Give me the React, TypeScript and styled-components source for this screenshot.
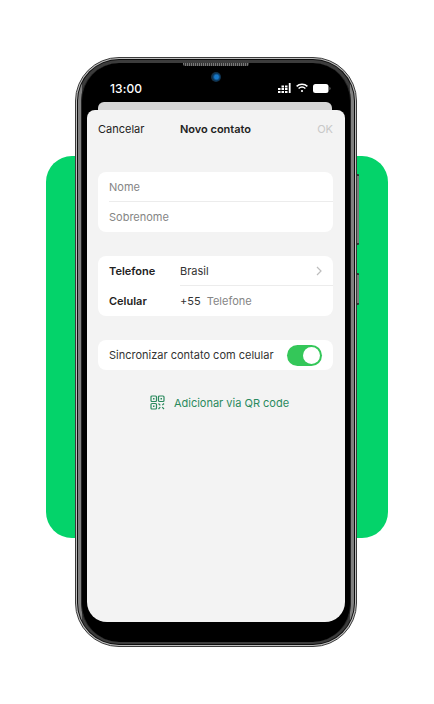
import React from "react";
import styled, { createGlobalStyle } from "styled-components";

const Global = createGlobalStyle`
  html, body { margin: 0; padding: 0; background: #fff; }
  body { font-family: Inter, "Liberation Sans", sans-serif; -webkit-font-smoothing: antialiased; }
  * { box-sizing: border-box; }
`;

const Stage = styled.div`
  position: relative;
  width: 434px;
  height: 704px;
  padding: 156px 46px 0;
  overflow: hidden;
`;

const GreenPanel = styled.div`
  width: 342px;
  height: 382px;
  border-radius: 26px;
  background: #04d36a;
`;

const Phone = styled.div`
  position: absolute;
  left: 75px;
  top: 57px;
  width: 282px;
  height: 590px;
  border-radius: 44px;
  background: #bdbdbd;
  padding: 1px;
  border: 1px solid #3a3a3a;
`;

const RingOuter = styled.div`
  height: 100%;
  border-radius: 42px;
  background: #0c0c0c;
  padding: 1px;
`;

const RingMid = styled.div`
  height: 100%;
  border-radius: 41px;
  background: linear-gradient(90deg, #808080 0 4px, #3c3c3c 4px calc(100% - 4px), #808080 calc(100% - 4px));
  padding: 3px 3px 2px;
`;

const Bezel = styled.div`
  position: relative;
  height: 100%;
  border-radius: 38px;
  background: #000;
  padding: 39px 5px 20px;
  display: flex;
  flex-direction: column;
  border-left: 1px solid #222;
  border-right: 1px solid #222;
`;

const SideButton = styled.div<{ $top: number; $height: number }>`
  position: absolute;
  left: 281px;
  top: ${(p) => p.$top}px;
  width: 2px;
  height: ${(p) => p.$height}px;
  background: linear-gradient(180deg, #333 0 2px, #7a7a7a 2px calc(100% - 2px), #333 calc(100% - 2px));
  border-radius: 0 1px 1px 0;
`;

const Speaker = styled.div`
  position: absolute;
  top: 0;
  left: 50%;
  margin-left: -33px;
  width: 66px;
  height: 3px;
  background: repeating-linear-gradient(90deg, #777 0 1px, #333 1px 2px);
  border-radius: 0 0 2px 2px;
`;

const Camera = styled.div`
  position: absolute;
  top: 9px;
  left: 50%;
  margin-left: -5px;
  width: 10px;
  height: 10px;
  border-radius: 50%;
  background: radial-gradient(circle at 55% 50%, #1878c8 0 25%, #0a3558 50%, #1c2a35 75%, #333 100%);
`;

const StatusBar = styled.div`
  position: absolute;
  top: 18px;
  left: 28px;
  right: 19px;
  height: 14px;
  display: flex;
  align-items: center;
  justify-content: space-between;
  color: #fff;
`;

const Clock = styled.span`
  font-size: 12px;
  font-weight: 500;
  letter-spacing: 0.1px;
`;

const StatusIcons = styled.div`
  display: flex;
  align-items: center;
  gap: 5px;
`;

const SheetBack = styled.div`
  height: 8px;
  margin: 0 13px 0 11px;
  flex: none;
  border-radius: 6px 6px 0 0;
  background: #d6d6d6;
`;

const Screen = styled.div`
  flex: 1;
  background: #f3f3f3;
  border-radius: 8px 8px 20px 20px;
  padding: 0 12px 0 11px;
  display: flex;
  flex-direction: column;
`;

const Header = styled.div`
  height: 37px;
  display: grid;
  grid-template-columns: 1fr auto 1fr;
  align-items: center;
  margin-bottom: 25px;
  font-size: 11px;
`;

const HeaderText = styled.span<{ $tone: "plain" | "title" | "off" }>`
  color: ${(p) => (p.$tone === "off" ? "#c8c8c8" : "#222")};
  font-weight: ${(p) => (p.$tone === "title" ? 600 : 400)};
  text-align: ${(p) => (p.$tone === "off" ? "right" : "left")};
`;

const Card = styled.div<{ $gap: number }>`
  background: #fff;
  border-radius: 8px;
  margin-bottom: ${(p) => p.$gap}px;
`;

const NameRow = styled.div<{ $divider?: boolean }>`
  height: 30px;
  margin-left: 11px;
  display: flex;
  align-items: center;
  font-size: 11px;
  color: #858585;
  border-bottom: ${(p) => (p.$divider ? "1px solid #ececec" : "none")};
`;

const PhoneRow = styled.div`
  height: 30px;
  padding-left: 11px;
  display: flex;
  align-items: center;
  font-size: 11px;
`;

const PhoneLabel = styled.span`
  width: 71px;
  flex: none;
  font-weight: 600;
  color: #222;
`;

const PhoneValue = styled.div<{ $divider?: boolean }>`
  flex: 1;
  height: 100%;
  display: flex;
  align-items: center;
  justify-content: space-between;
  padding-right: 11px;
  color: #333;
  border-bottom: ${(p) => (p.$divider ? "1px solid #ececec" : "none")};
`;

const Prefix = styled.span`
  color: #333;
  margin-right: 6px;
`;

const Hint = styled.span`
  color: #858585;
  flex: 1;
`;

const SyncCard = styled.div`
  height: 30px;
  padding: 0 11px;
  background: #fff;
  border-radius: 8px;
  display: flex;
  align-items: center;
  justify-content: space-between;
  font-size: 11px;
  color: #333;
`;

const Toggle = styled.div`
  width: 35px;
  height: 21px;
  border-radius: 11px;
  background: #34c759;
  padding: 2px;
  display: flex;
  justify-content: flex-end;
`;

const Knob = styled.div`
  width: 17px;
  height: 17px;
  border-radius: 50%;
  background: #fff;
`;

const QrLink = styled.div`
  margin-top: 25px;
  padding-left: 8px;
  display: flex;
  align-items: center;
  justify-content: center;
  gap: 9px;
  font-size: 11px;
  color: #2a8a5e;
`;

const SignalIcon = () => (
  <svg width="13" height="10" viewBox="0 0 13 10" fill="#fff">
    <rect x="0" y="5" width="2.500" height="2" /><rect x="0" y="8" width="2.500" height="2" />
    <rect x="3.500" y="2.500" width="2.500" height="2" /><rect x="3.500" y="5" width="2.500" height="2" /><rect x="3.500" y="8" width="2.500" height="2" />
    <rect x="7" y="2.500" width="2.500" height="2" /><rect x="7" y="5" width="2.500" height="2" /><rect x="7" y="8" width="2.500" height="2" />
    <rect x="10.800" y="0" width="1.800" height="10" />
  </svg>
);

const WifiIcon = () => (
  <svg width="12" height="10" viewBox="0 0 12 10" fill="none" stroke="#fff" strokeWidth="1.5">
    <path d="M.6 3.4C3.6.6 8.4.6 11.4 3.4" />
    <path d="M2.6 5.5c2-1.700 4.800-1.700 6.800 0" />
    <circle cx="6" cy="8" r="1.100" fill="#fff" stroke="none" />
  </svg>
);

const BatteryIcon = () => (
  <svg width="18" height="9" viewBox="0 0 18 9">
    <rect x="0" y="0" width="15.500" height="9" rx="2.500" fill="#fff" />
    <path d="M16.500 3v3c.7-.2 1-.8 1-1.500s-.3-1.300-1-1.500z" fill="#777" />
  </svg>
);

const Chevron = () => (
  <svg width="6" height="10" viewBox="0 0 6 10" fill="none" stroke="#bdbdbd" strokeWidth="1.200">
    <path d="M1 1l4 4-4 4" />
  </svg>
);

const QrIcon = () => (
  <svg width="15" height="15" viewBox="0 0 15 15" fill="none" stroke="#2a8a5e" strokeWidth="1.200">
    <rect x="1" y="1" width="5.500" height="5.500" rx="1" />
    <rect x="8.500" y="1" width="5.500" height="5.500" rx="1" />
    <rect x="1" y="8.500" width="5.500" height="5.500" rx="1" />
    <rect x="3" y="3" width="1.500" height="1.500" fill="#2a8a5e" stroke="none" />
    <rect x="10.500" y="3" width="1.500" height="1.500" fill="#2a8a5e" stroke="none" />
    <rect x="3" y="10.500" width="1.500" height="1.500" fill="#2a8a5e" stroke="none" />
    <path d="M8.500 8.500l1.800 1.800M14 8.500l-1.700 1.700M8.500 14l1.800-1.800M14 14l-1.800-1.800" />
  </svg>
);

export default function App() {
  return (
    <>
      <Global />
      <Stage>
        <GreenPanel />
        <Phone>
          <SideButton $top={116} $height={71} />
          <SideButton $top={215} $height={32} />
          <RingOuter>
            <RingMid>
              <Bezel>
                <Speaker />
                <Camera />
                <StatusBar>
                  <Clock>13:00</Clock>
                  <StatusIcons>
                    <SignalIcon />
                    <WifiIcon />
                    <BatteryIcon />
                  </StatusIcons>
                </StatusBar>
                <SheetBack />
                <Screen>
                  <Header>
                    <HeaderText $tone="plain">Cancelar</HeaderText>
                    <HeaderText $tone="title">Novo contato</HeaderText>
                    <HeaderText $tone="off">OK</HeaderText>
                  </Header>
                  <Card $gap={24}>
                    <NameRow $divider>Nome</NameRow>
                    <NameRow>Sobrenome</NameRow>
                  </Card>
                  <Card $gap={24}>
                    <PhoneRow>
                      <PhoneLabel>Telefone</PhoneLabel>
                      <PhoneValue $divider>
                        Brasil
                        <Chevron />
                      </PhoneValue>
                    </PhoneRow>
                    <PhoneRow>
                      <PhoneLabel>Celular</PhoneLabel>
                      <PhoneValue>
                        <Prefix>+55</Prefix>
                        <Hint>Telefone</Hint>
                      </PhoneValue>
                    </PhoneRow>
                  </Card>
                  <SyncCard>
                    Sincronizar contato com celular
                    <Toggle>
                      <Knob />
                    </Toggle>
                  </SyncCard>
                  <QrLink>
                    <QrIcon />
                    Adicionar via QR code
                  </QrLink>
                </Screen>
              </Bezel>
            </RingMid>
          </RingOuter>
        </Phone>
      </Stage>
    </>
  );
}
